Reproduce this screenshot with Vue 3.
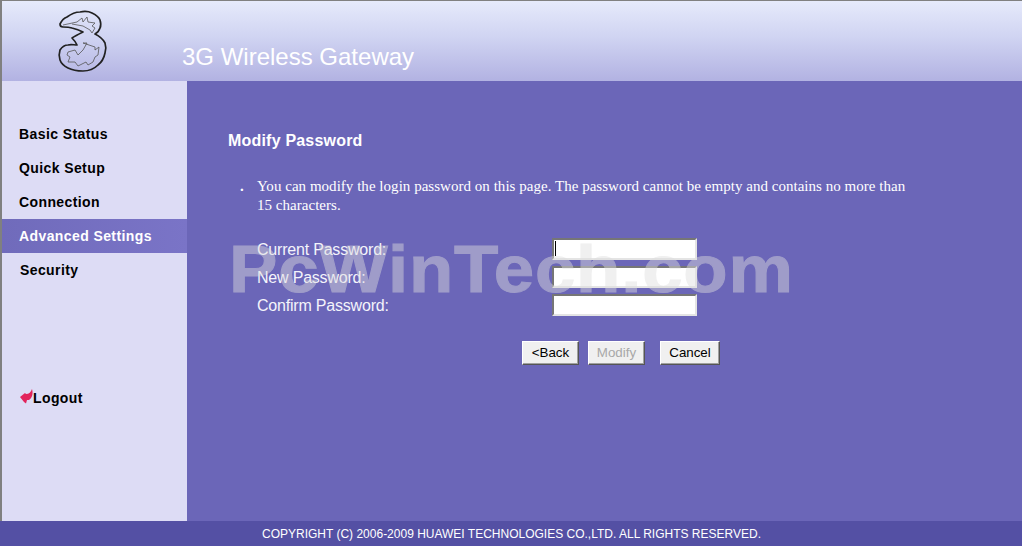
<template>
  <div class="page">
    <header class="top-bar">
      <div class="logo-cell">
        <svg class="logo" width="54" height="65" viewBox="56 9 54 65" fill="none">
          <path d="M60 24 C62 20 64 18 67 17 C71 14 76 12 80 12 C85 11 90 12 92 13 C96 15 99 17 100 20 C101 23 101 26 100 28 C99 31 97 33 95 34 C99 36 103 39 105 43 C106 46 106 50 105 53 C104 58 102 62 98 65 C94 69 89 71 83 71 C77 71 72 70 68 68 C64 66 61 63 60 60 C59 57 59 53 60 50 C62 47 65 45 68 45 C71 44 74 45 77 45 C76 42 74 40 72 38 C75 36 79 34 83 32 C79 30 76 29 72 28 C69 27 66 27 63 27 C61 27 60 26 60 24 Z" stroke="#222" stroke-width="1.7" stroke-linejoin="round" />
          <path d="M63 25 L77 22 L82 18 L83 22 L87 17 L88 22 L95 23 L92 26 L95 28 L92 33 L90 30 L83 26 L72 24" stroke="#555" stroke-width="0.8" stroke-linejoin="round" />
          <path d="M87 43 L83 43 L95 47 L95 50 L99 47 L98 55 L95 57 L93 62 L88 65 L86 62 L78 66 L75 62 L68 62 L70 57 L67 55 L68 52 L75 50 L78 55 L83 50 L87 43" stroke="#555" stroke-width="0.8" stroke-linejoin="round" />
        </svg>
      </div>
      <div class="product">3G Wireless Gateway</div>
    </header>

    <div class="middle">
      <nav class="side">
        <ul class="menu">
          <li
            v-for="item in menu"
            :key="item.label"
            class="menu-item"
            :class="{ active: item.active, nudge: item.label === 'Security' }"
          >
            {{ item.label }}
          </li>
        </ul>
        <div class="logout">
          <svg class="logout-icon" width="13" height="15" viewBox="0 0 13 15">
            <path d="M0 8 L5 4 L6 5 C9 5 11 3 12 0 C13.500 5 12 9 9 11 L7 11 L6 14.500 L4 13 Z" fill="#e2245c" />
          </svg>
          <span>Logout</span>
        </div>
      </nav>

      <main class="content">
        <h1 class="title">Modify Password</h1>
        <div class="note">
          <span class="dot">.</span>
          <p>You can modify the login password on this page. The password cannot be empty and contains no more than 15 characters.</p>
        </div>
        <form class="fields" @submit.prevent>
          <template v-for="(f, i) in fields" :key="f">
            <label class="field-label">{{ f }}</label>
            <div class="input-wrap">
              <input class="field-input" type="password" />
              <span v-if="i === 0" class="caret"></span>
            </div>
          </template>
        </form>
        <div class="buttons">
          <button class="btn back" type="button">&lt;Back</button>
          <button class="btn modify" type="button" disabled>Modify</button>
          <button class="btn cancel" type="button">Cancel</button>
        </div>
      </main>
    </div>

    <footer class="footer">COPYRIGHT (C) 2006-2009 HUAWEI TECHNOLOGIES CO.,LTD. ALL RIGHTS RESERVED.</footer>

    <div class="watermark">PcWinTech.com</div>
  </div>
</template>

<script setup>
const menu = [
  { label: 'Basic Status' },
  { label: 'Quick Setup' },
  { label: 'Connection' },
  { label: 'Advanced Settings', active: true },
  { label: 'Security' }
]

const fields = ['Current Password:', 'New Password:', 'Confirm Password:']
</script>

<style>
html, body {
  margin: 0;
  overflow: hidden;
}
</style>

<style scoped>
.page {
  position: relative;
  width: 1022px;
  height: 546px;
  box-sizing: border-box;
  border-top: 1px solid #808080;
  display: flex;
  flex-direction: column;
  font-family: "Liberation Sans", Arial, sans-serif;
  overflow: hidden;
}

.top-bar {
  height: 80px;
  flex: none;
  display: flex;
  border-left: 2px solid #808080;
  background: linear-gradient(#e6eafb, #d0d4f2 45%, #b2b2e2);
}

.logo-cell {
  width: 180px;
  padding: 8px 0 0 54px;
  box-sizing: border-box;
}

.logo {
  display: block;
}

.product {
  color: #fff;
  font-size: 24px;
  line-height: 28px;
  padding-top: 42px;
}

.middle {
  flex: 1;
  display: flex;
  min-height: 0;
}

.side {
  width: 187px;
  flex: none;
  box-sizing: border-box;
  border-left: 2px solid #808080;
  background: #dddcf5;
  padding-top: 36px;
}

.menu {
  list-style: none;
  margin: 0;
  padding: 0;
}

.menu-item {
  height: 34px;
  line-height: 34px;
  padding-left: 17px;
  font-size: 14px;
  font-weight: bold;
  letter-spacing: 0.4px;
  color: #000;
}

.menu-item.active {
  color: #fff;
  background: linear-gradient(90deg, #706bbb, #7a74c7);
}

.menu-item.nudge {
  padding-left: 18px;
}

.logout {
  margin-top: 94px;
  padding-left: 18px;
  display: flex;
  align-items: center;
  font-size: 14px;
  font-weight: bold;
  letter-spacing: 0.4px;
  height: 34px;
}

.logout-icon {
  margin-top: -3px;
}

.content {
  flex: 1;
  background: #6b66b8;
  color: #fff;
  padding: 50px 0 0 41px;
}

.title {
  margin: 0;
  font-size: 16px;
  font-weight: bold;
  line-height: 20px;
  letter-spacing: 0.2px;
}

.note {
  display: flex;
  margin-top: 26px;
  font-family: "Liberation Serif", "Times New Roman", serif;
  font-size: 15px;
  line-height: 19px;
  letter-spacing: 0.03px;
}

.dot {
  width: 29px;
  padding-left: 12px;
  box-sizing: border-box;
  font-weight: bold;
}

.note p {
  margin: 0;
  width: 655px;
}

.fields {
  display: grid;
  grid-template-columns: 295px 145px;
  grid-auto-rows: 28px;
  margin: 20px 0 0 29px;
  align-items: center;
}

.field-label {
  font-size: 16px;
  letter-spacing: -0.2px;
  color: #f4f4fb;
  padding-top: 1px;
}

.input-wrap {
  position: relative;
  height: 22px;
}

.field-input {
  display: block;
  width: 145px;
  height: 22px;
  box-sizing: border-box;
  border: 2px solid;
  border-color: #767676 #e4e4e4 #e4e4e4 #767676;
  background: #fff;
  padding: 0;
  outline: none;
}

.caret {
  position: absolute;
  z-index: 2;
  left: 3px;
  top: 3px;
  width: 1px;
  height: 15px;
  background: #000;
}

.buttons {
  display: flex;
  margin: 22px 0 0 294px;
}

.btn {
  height: 24px;
  box-sizing: border-box;
  padding: 0 0 2px;
  font-family: inherit;
  font-size: 13.33px;
  color: #000;
  background: #f0f0f0;
  border: 1px solid;
  border-color: #fff #555 #555 #fff;
  box-shadow: inset -1px -1px 0 #a0a0a0;
}

.back {
  width: 57px;
  margin-right: 9px;
}

.modify {
  width: 57px;
  margin-right: 15px;
  color: #a8a8a8;
}

.cancel {
  width: 60px;
}

.footer {
  flex: none;
  height: 25px;
  line-height: 26px;
  padding-left: 1px;
  background: #5450a4;
  color: #fff;
  text-align: center;
  font-size: 12px;
}

.watermark {
  position: absolute;
  left: 229px;
  top: 228px;
  font-size: 66px;
  line-height: 80px;
  letter-spacing: 0.7px;
  font-weight: bold;
  color: rgb(222, 222, 222);
  -webkit-text-stroke: 1px rgb(222, 222, 222);
  opacity: 0.45;
  transform: scaleX(1.1);
  transform-origin: left center;
  pointer-events: none;
  white-space: nowrap;
}
</style>
